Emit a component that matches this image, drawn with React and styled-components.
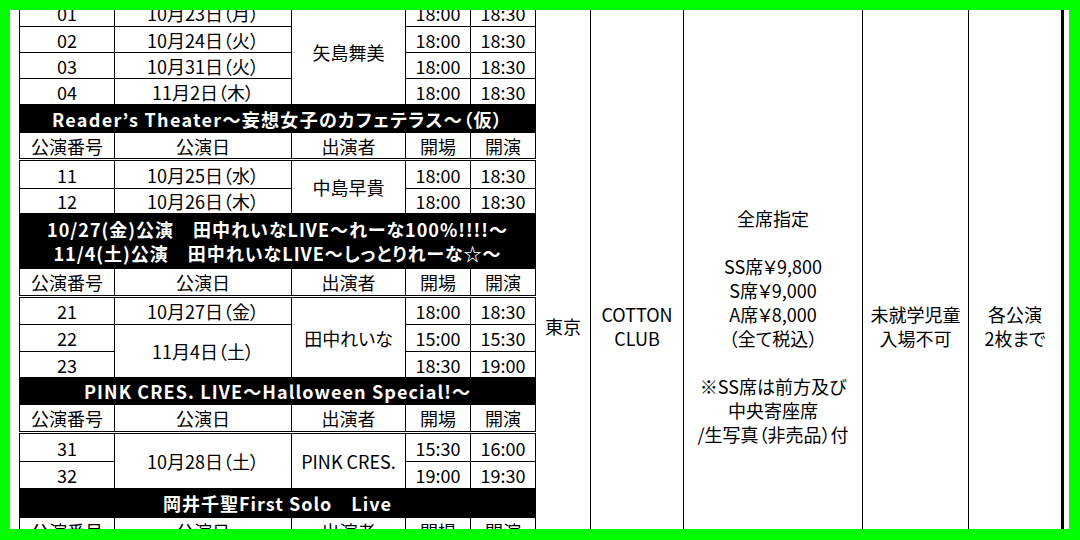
import React from 'react';
import styled, { createGlobalStyle } from 'styled-components';

const GlobalStyle = createGlobalStyle`
  html, body {
    margin: 0;
    padding: 0;
    background: #ffffff;
  }
  body {
    font-family: "Noto Sans CJK JP", "Noto Sans", sans-serif;
  }
`;

const Frame = styled.div`
  width: 1080px;
  height: 540px;
  box-sizing: border-box;
  border: solid #00ff00;
  border-width: 10px 11px 11px 10px;
  background: #ffffff;
  overflow: hidden;
`;

const Sheet = styled.div`
  display: flex;
  align-items: stretch;
  height: 654px;
  margin-top: -11px;
  padding-left: 9px;
  color: #000000;
  font-family: "Noto Sans CJK JP", "Noto Sans", sans-serif;
  font-size: 18px;
  font-feature-settings: "palt";
`;

const Table = styled.table`
  flex: none;
  align-self: flex-start;
  width: 516px;
  table-layout: fixed;
  border-collapse: collapse;
`;

const Row = styled.tr`
  height: ${(p) => p.$h}px;
`;

const Cell = styled.td`
  border: 1px solid #000000;
  padding: 0;
  text-align: center;
  vertical-align: middle;
  line-height: 20px;
  white-space: nowrap;
`;

const HeadCell = styled(Cell)`
  border-bottom: 3px double #000000;
`;

const BannerCell = styled(Cell)`
  background: #000000;
  color: #ffffff;
  font-weight: 700;
  line-height: 24px;
  letter-spacing: ${(p) => p.$spacing}px;
`;

const SideCell = styled.div`
  flex: none;
  box-sizing: border-box;
  width: ${(p) => p.$w}px;
  border-right: ${(p) => (p.$thick ? 3 : 1)}px solid #000000;
  display: flex;
  flex-direction: column;
  align-items: center;
  justify-content: center;
  text-align: center;
  line-height: 24px;
  white-space: nowrap;
`;

const Line = styled.div`
  min-height: 24px;
`;

const HEADERS = ['公演番号', '公演日', '出演者', '開場', '開演'];

function HeadRow({ h }) {
  return (
    <Row $h={h}>
      {HEADERS.map((t) => (
        <HeadCell key={t}>{t}</HeadCell>
      ))}
    </Row>
  );
}

function Banner({ h, spacing = 1.3, children }) {
  return (
    <Row $h={h}>
      <BannerCell colSpan={5} $spacing={spacing}>
        {children}
      </BannerCell>
    </Row>
  );
}

function Side({ w, thick, lines }) {
  return (
    <SideCell $w={w} $thick={thick}>
      {lines.map((l, i) => (
        <Line key={i}>{l}</Line>
      ))}
    </SideCell>
  );
}

const PRICE = [
  '全席指定',
  '',
  'SS席￥9,800',
  'S席￥9,000',
  'A席￥8,000',
  '（全て税込）',
  '',
  '※SS席は前方及び',
  '中央寄座席',
  '/生写真（非売品）付',
];

export default function App() {
  return (
    <>
      <GlobalStyle />
      <Frame>
        <Sheet>
          <Table>
            <colgroup>
              <col style={{ width: 95 }} />
              <col style={{ width: 177 }} />
              <col style={{ width: 114 }} />
              <col style={{ width: 65 }} />
              <col style={{ width: 65 }} />
            </colgroup>
            <tbody>
              <Row $h={27}>
                <Cell>01</Cell>
                <Cell>10月23日（月）</Cell>
                <Cell rowSpan={4}>矢島舞美</Cell>
                <Cell>18:00</Cell>
                <Cell>18:30</Cell>
              </Row>
              <Row $h={26}>
                <Cell>02</Cell>
                <Cell>10月24日（火）</Cell>
                <Cell>18:00</Cell>
                <Cell>18:30</Cell>
              </Row>
              <Row $h={26}>
                <Cell>03</Cell>
                <Cell>10月31日（火）</Cell>
                <Cell>18:00</Cell>
                <Cell>18:30</Cell>
              </Row>
              <Row $h={26}>
                <Cell>04</Cell>
                <Cell>11月2日（木）</Cell>
                <Cell>18:00</Cell>
                <Cell>18:30</Cell>
              </Row>

              <Banner h={28}>Reader’s Theater～妄想女子のカフェテラス～（仮）</Banner>
              <HeadRow h={27} />
              <Row $h={29}>
                <Cell>11</Cell>
                <Cell>10月25日（水）</Cell>
                <Cell rowSpan={2}>中島早貴</Cell>
                <Cell>18:00</Cell>
                <Cell>18:30</Cell>
              </Row>
              <Row $h={25}>
                <Cell>12</Cell>
                <Cell>10月26日（木）</Cell>
                <Cell>18:00</Cell>
                <Cell>18:30</Cell>
              </Row>

              <Banner h={55} spacing={1}>
                10/27(金)公演　田中れいなLIVE～れーな100%!!!!～
                <br />
                11/4(土)公演　田中れいなLIVE～しっとりれーな☆～
              </Banner>
              <HeadRow h={28} />
              <Row $h={28}>
                <Cell>21</Cell>
                <Cell>10月27日（金）</Cell>
                <Cell rowSpan={3}>田中れいな</Cell>
                <Cell>18:00</Cell>
                <Cell>18:30</Cell>
              </Row>
              <Row $h={27}>
                <Cell>22</Cell>
                <Cell rowSpan={2}>11月4日（土）</Cell>
                <Cell>15:00</Cell>
                <Cell>15:30</Cell>
              </Row>
              <Row $h={26}>
                <Cell>23</Cell>
                <Cell>18:30</Cell>
                <Cell>19:00</Cell>
              </Row>

              <Banner h={27} spacing={1.1}>PINK CRES. LIVE～Halloween Special!～</Banner>
              <HeadRow h={28} />
              <Row $h={29}>
                <Cell>31</Cell>
                <Cell rowSpan={2}>10月28日（土）</Cell>
                <Cell rowSpan={2}>PINK CRES.</Cell>
                <Cell>15:30</Cell>
                <Cell>16:00</Cell>
              </Row>
              <Row $h={27}>
                <Cell>32</Cell>
                <Cell>19:00</Cell>
                <Cell>19:30</Cell>
              </Row>

              <Banner h={29} spacing={1}>岡井千聖First Solo　Live</Banner>
              <HeadRow h={27} />
            </tbody>
          </Table>

          <Side w={55} lines={['東京']} />
          <Side w={93} lines={['COTTON', 'CLUB']} />
          <Side w={179} lines={PRICE} />
          <Side w={106} lines={['未就学児童', '入場不可']} />
          <Side w={95} thick lines={['各公演', '2枚まで']} />
        </Sheet>
      </Frame>
    </>
  );
}
